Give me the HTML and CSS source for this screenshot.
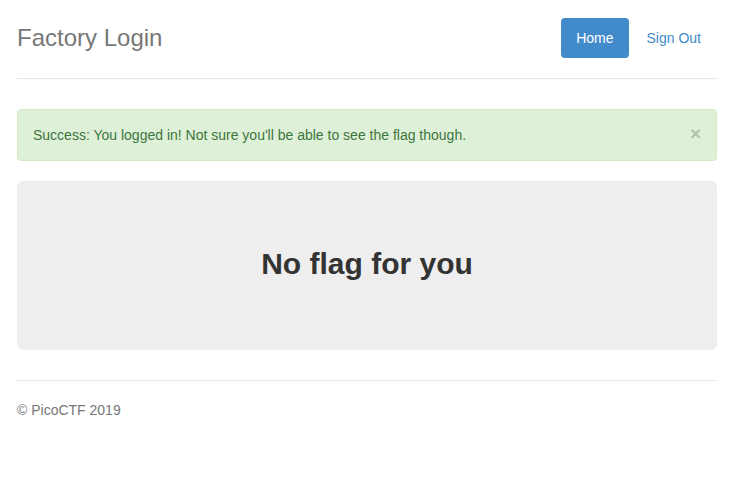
FILE: index.html
```html
<!DOCTYPE html>
<html lang="en">

<head>
    <meta charset="UTF-8">
    <meta name="viewport" content="width=device-width, initial-scale=1.0">
    <title>Factory Login</title>
    <link rel="stylesheet" href="styles.css">
</head>

<body>
    <div class="container">
        <div class="header">
            <h3 class="brand">Factory Login</h3>
            <ul class="nav-pills">
                <li class="active"><a href="#">Home</a></li>
                <li><a href="#">Sign Out</a></li>
            </ul>
        </div>

        <div class="alert alert-success">
            <span>Success: You logged in! Not sure you'll be able to see the flag though.</span>
            <button class="close" type="button">&times;</button>
        </div>

        <div class="jumbotron">
            <h1>No flag for you</h1>
        </div>

        <footer class="footer">
            <p>&copy; PicoCTF 2019</p>
        </footer>
    </div>
</body>

</html>
```

FILE: styles.css
```css
body {
    margin: 0;
    padding: 18px 0 20px;
    font: 14px/20px 'Liberation Sans', Arial, sans-serif;
    color: #333;
    background: #fff;
}

.container {
    padding: 0 14px 0 17px;
}

.header {
    display: flex;
    align-items: center;
    justify-content: space-between;
    padding-bottom: 20px;
    border-bottom: 1px solid #e5e5e5;
    margin-bottom: 30px;
}

.brand {
    margin: 0;
    font-size: 24px;
    font-weight: normal;
    line-height: 40px;
    color: #777;
}

.nav-pills {
    display: flex;
    gap: 3px;
    margin: 0 1px 0 0;
    padding: 0;
    list-style: none;
}

.nav-pills a {
    display: block;
    padding: 10px 15px;
    color: #428bca;
    text-decoration: none;
    border-radius: 4px;
}

.nav-pills .active a {
    color: #fff;
    background-color: #428bca;
}

.alert {
    display: flex;
    align-items: center;
    justify-content: space-between;
    padding: 15px;
    margin-bottom: 20px;
    border: 1px solid transparent;
    border-radius: 4px;
}

.alert-success {
    color: #3c763d;
    background-color: #dff0d8;
    border-color: #d6e9c6;
}

.close {
    padding: 0;
    margin: -2px 0 0;
    border: 0;
    background: transparent;
    font: bold 19px/20px 'Liberation Sans', Arial, sans-serif;
    color: #000;
    opacity: 0.2;
    cursor: pointer;
}

.jumbotron {
    padding: 66px 60px 70px;
    margin-bottom: 30px;
    text-align: center;
    background-color: #eee;
    border-radius: 6px;
}

.jumbotron h1 {
    margin: 0;
    font-size: 30px;
    font-weight: bold;
    line-height: 33px;
}

.footer {
    padding-top: 19px;
    border-top: 1px solid #e5e5e5;
    color: #777;
}

.footer p {
    margin: 0 0 10px;
}
```
